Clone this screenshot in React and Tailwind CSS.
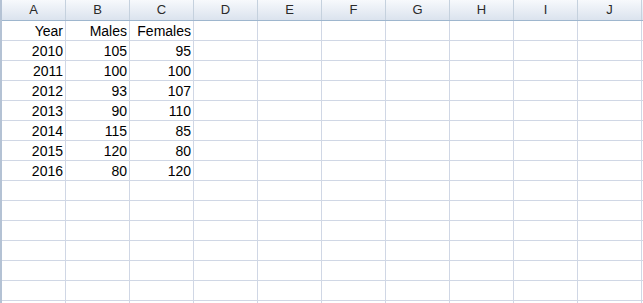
const cols = ["A", "B", "C", "D", "E", "F", "G", "H", "I", "J", ""];

const data = [
  ["Year", "Males", "Females"],
  ["2010", "105", "95"],
  ["2011", "100", "100"],
  ["2012", "93", "107"],
  ["2013", "90", "110"],
  ["2014", "115", "85"],
  ["2015", "120", "80"],
  ["2016", "80", "120"],
];

const rowCount = 15;

export default function App() {
  return (
    <div className="w-[643px] h-[303px] overflow-hidden bg-white border-l-2 border-[#b4c2d4] font-['Liberation_Sans',sans-serif] text-[14px] text-black">
      {/* column headers */}
      <div className="flex h-[21px] border-b border-[#9eb6ce]">
        {cols.map((c, i) => (
          <div
            key={i}
            className="w-16 shrink-0 h-full flex items-center justify-center border-r border-[#c5d1de] bg-gradient-to-b from-[#f7f9fc] to-[#dbe3ee] text-[13px] text-[#2a2a2a]"
          >
            {c}
          </div>
        ))}
      </div>

      {/* rows */}
      {Array.from({ length: rowCount }).map((_, r) => (
        <div key={r} className="flex h-5 border-b border-[#d0d7e5]">
          {cols.map((_, c) => (
            <div
              key={c}
              className="w-16 shrink-0 h-full flex items-center justify-end pr-[2px] pt-[1px] border-r border-[#d0d7e5] leading-none"
            >
              {data[r] && data[r][c]}
            </div>
          ))}
        </div>
      ))}
    </div>
  );
}
